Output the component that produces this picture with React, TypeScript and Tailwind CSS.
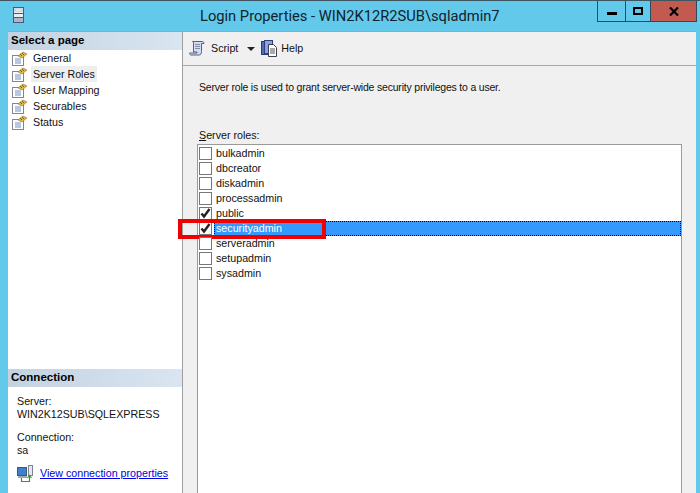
const pages = ["General", "Server Roles", "User Mapping", "Securables", "Status"];

const roles = [
  { name: "bulkadmin", checked: false },
  { name: "dbcreator", checked: false },
  { name: "diskadmin", checked: false },
  { name: "processadmin", checked: false },
  { name: "public", checked: true },
  { name: "securityadmin", checked: true },
  { name: "serveradmin", checked: false },
  { name: "setupadmin", checked: false },
  { name: "sysadmin", checked: false },
];

function ServerIcon() {
  return (
    <svg width="11" height="16" viewBox="0 0 11 16" className="shrink-0">
      <rect x="0.5" y="0.5" width="10" height="15" fill="#e8ecf4" stroke="#4a5a78" />
      <rect x="2" y="2" width="7" height="2" fill="#fff" stroke="#8a94a8" strokeWidth="0.5" />
      <line x1="1" y1="6.5" x2="10" y2="6.5" stroke="#4a5a78" />
      <line x1="1" y1="10.5" x2="10" y2="10.5" stroke="#4a5a78" />
      <rect x="1" y="11" width="9" height="4" fill="#aeb6c8" />
    </svg>
  );
}

function PageIcon() {
  return (
    <svg width="16" height="15" viewBox="0 0 16 15" className="shrink-0">
      <rect x="0.5" y="4.5" width="11" height="10" fill="#fff" stroke="#7d8796" />
      <path d="M3 8h6M3 10h6M3 12h6" stroke="#6f8fc0" />
      <path d="M6 5l5-4 4 2-5 4z" fill="#e5b93c" stroke="#8a7430" strokeWidth="0.6" />
      <path d="M8 3l2 2M10 2l2 2" stroke="#5a4c20" strokeWidth="0.8" />
    </svg>
  );
}

function ScriptIcon() {
  return (
    <svg width="17" height="17" viewBox="0 0 17 17" className="shrink-0">
      <path d="M3.5 1.5h10c1 0 1.5 1 1.5 2h-2.5v8c0 2-1 3.500-2 3.500H2c-1 0-1.500-1-1.500-2H8v-1H4.500V3c0-1-.5-1.500-1-1.500z" fill="#d5dcec" stroke="#52628a" />
      <path d="M6 4.500h5M6 6.500h5M6 8.500h5" stroke="#7d8cb0" />
    </svg>
  );
}

function HelpIcon() {
  return (
    <svg width="17" height="17" viewBox="0 0 17 17" className="shrink-0">
      <rect x="0.5" y="1.500" width="8" height="13" fill="#4f6bb5" stroke="#2d3f78" />
      <rect x="3.500" y="0.500" width="8" height="13" fill="#8ba2dc" stroke="#2d3f78" />
      <path d="M7.500 4.500h5l3 3v9h-8z" fill="#fff" stroke="#3a3f55" />
      <path d="M9 9h5M9 11h5M9 13h5" stroke="#555" />
    </svg>
  );
}

function LinkIcon() {
  return (
    <svg width="17" height="17" viewBox="0 0 17 17" className="shrink-0">
      <rect x="0.500" y="2.500" width="9" height="8" fill="#3f7fd0" stroke="#48566e" />
      <rect x="11.500" y="0.500" width="4" height="10" fill="#e4e8ee" stroke="#7a8494" />
      <rect x="1" y="11" width="9" height="2" fill="#a0a8b4" />
      <path d="M4.500 13v3.500h8V11" fill="none" stroke="#2f9a2f" strokeWidth="1.200" />
      <path d="M10.500 13l2-2.500 2 2.500" fill="none" stroke="#2f9a2f" strokeWidth="1.200" />
    </svg>
  );
}

function Check() {
  return (
    <svg width="11" height="11" viewBox="0 0 11 11">
      <path d="M1.500 5.500l2.500 3 5.500-7.500" fill="none" stroke="#222" strokeWidth="2.400" />
    </svg>
  );
}

function SectionHeader({ children }: { children: string }) {
  return (
    <div className="h-[18px] pl-[3px] flex items-center text-[11.5px] font-bold text-black bg-gradient-to-r from-[#c3d2e1] to-[#d9e5f1]">
      {children}
    </div>
  );
}

export default function App() {
  return (
    <div className="w-[700px] h-[493px] overflow-hidden flex flex-col bg-[#63c9ea] font-['Liberation_Sans',Arial,sans-serif] text-[10.7px] text-[#111]">
      <div className="h-[31px] shrink-0 flex items-start border-t border-[#3f5560]">
        <div className="w-[200px] pl-[13px] pt-[6px] shrink-0">
          <ServerIcon />
        </div>
        <div className="pt-[4px] text-[14.700px] leading-[22px] text-[#10222c] font-['Roboto',sans-serif] whitespace-nowrap">
          {"Login Properties - WIN2K12R2SUB\\sqladmin7"}
        </div>
        <div className="ml-auto mr-[3px] h-[21px] flex border border-t-0 border-[#2f4a58]">
          <div className="w-[28px] flex items-center justify-center border-r border-[#2f4a58]">
            <div className="w-[10px] h-[3px] bg-black mt-[5px]" />
          </div>
          <div className="w-[25px] flex items-center justify-center border-r border-[#2f4a58]">
            <div className="w-[10px] h-[8px] border-2 border-black" />
          </div>
          <div className="w-[45px] flex items-center justify-center bg-[#c25a50]">
            <svg width="10" height="9" viewBox="0 0 10 9">
              <path d="M1 0.500l8 8M9 0.500l-8 8" stroke="#000" strokeWidth="2.200" />
            </svg>
          </div>
        </div>
      </div>

      <div className="flex-1 min-h-0 ml-[8px] mr-[4px] flex border-t border-[#9aa8b0] bg-white">
        <div className="w-[174px] shrink-0 flex flex-col bg-white">
          <SectionHeader>Select a page</SectionHeader>
          <div className="flex flex-col">
            {pages.map((page) => (
              <div key={page} className="h-[16px] flex items-center pl-[4px]">
                <PageIcon />
                <span
                  className={
                    page === "Server Roles"
                      ? "ml-[3px] px-[2px] leading-[16px] bg-[#eeeeee]"
                      : "ml-[3px] px-[2px] leading-[16px]"
                  }
                >
                  {page}
                </span>
              </div>
            ))}
          </div>
          <div className="mt-auto pb-[11px]">
            <SectionHeader>Connection</SectionHeader>
            <div className="pl-[9px] pt-[8px] leading-[13px]">
              <div>Server:</div>
              <div>{"WIN2K12SUB\\SQLEXPRESS"}</div>
              <div className="mt-[10px]">Connection:</div>
              <div>sa</div>
              <div className="mt-[8px] flex items-center gap-[6px]">
                <LinkIcon />
                <span className="text-[#0000e0] underline">View connection properties</span>
              </div>
            </div>
          </div>
        </div>

        <div className="flex-1 min-w-0 flex flex-col bg-[#f0f0f0] border-l border-[#a0a0a0]">
          <div className="h-[34px] shrink-0 flex items-center pl-[6px] border-b border-[#a8a8a8]">
            <ScriptIcon />
            <span className="ml-[5px]">Script</span>
            <div className="ml-[9px] w-0 h-0 border-x-[4px] border-x-transparent border-t-[4px] border-t-[#222]" />
            <div className="ml-[6px]">
              <HelpIcon />
            </div>
            <span className="ml-[3px]">Help</span>
          </div>
          <div className="flex-1 min-h-0 flex flex-col pl-[14px] pr-[14px]">
            <div className="ml-[2px] mt-[15px] leading-[13px] text-[10.500px] tracking-[-0.2px] whitespace-nowrap">
              Server role is used to grant server-wide security privileges to a user.
            </div>
            <div className="ml-[2px] mt-[35px] leading-[13px]">
              <span className="underline">S</span>erver roles:
            </div>
            <div className="mt-[2px] flex-1 min-h-0 pt-[1px] bg-white border-l border-r border-t border-[#9a9a9a]">
              {roles.map((role) => {
                const selected = role.name === "securityadmin";
                return (
                  <div key={role.name} className="relative h-[15px] flex items-center pl-[1px]">
                    <div className="w-[13px] h-[13px] flex items-center justify-center bg-white border border-[#777]">
                      {role.checked && <Check />}
                    </div>
                    {selected ? (
                      <div className="ml-[2px] flex-1 h-[15px] pl-[1px] leading-[15px] text-white bg-[#3399ff] border border-dotted border-black">
                        <span className="relative -top-[1px]">{role.name}</span>
                      </div>
                    ) : (
                      <div className="ml-[4px] leading-[15px]">{role.name}</div>
                    )}
                    {selected && (
                      <div className="absolute -left-[20px] -top-[2px] w-[148px] h-[20px] border-4 border-[#f00000]" />
                    )}
                  </div>
                );
              })}
            </div>
          </div>
        </div>
      </div>
    </div>
  );
}
